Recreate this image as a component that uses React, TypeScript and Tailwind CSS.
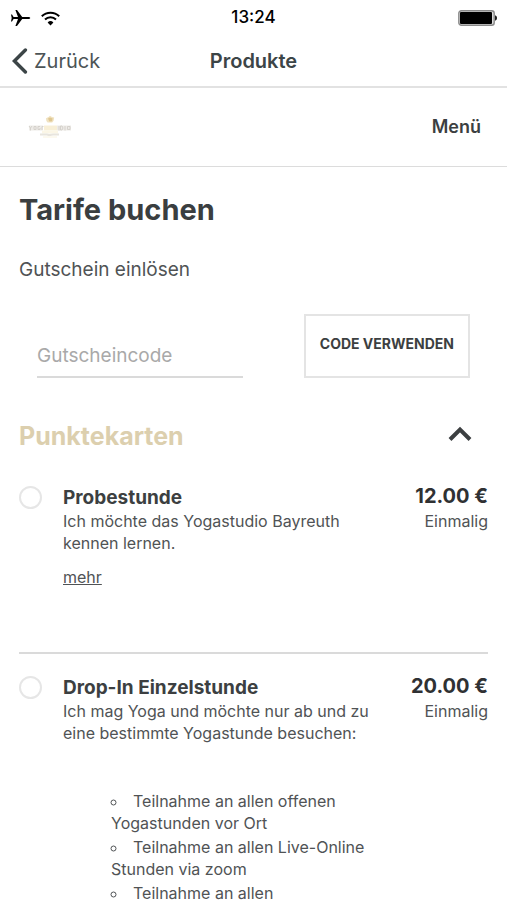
import React, { useState } from 'react';

const products = [
  {
    id: 'probestunde',
    name: 'Probestunde',
    price: '12.00 €',
    billing: 'Einmalig',
    description: 'Ich möchte das Yogastudio Bayreuth kennen lernen.',
    more: true,
    features: [],
  },
  {
    id: 'drop-in',
    name: 'Drop-In Einzelstunde',
    price: '20.00 €',
    billing: 'Einmalig',
    description: 'Ich mag Yoga und möchte nur ab und zu eine bestimmte Yogastunde besuchen:',
    more: false,
    features: [
      'Teilnahme an allen offenen Yogastunden vor Ort',
      'Teilnahme an allen Live-Online Stunden via zoom',
      'Teilnahme an allen',
    ],
  },
];

const StatusBar = () => (
  <div className="grid h-9 grid-cols-3 items-center px-2.5 text-black">
    <div className="flex items-center gap-2.5">
      {/* Airplane mode */}
      <svg width="21" height="18" viewBox="0 0 21 18" fill="currentColor" aria-hidden="true">
        <path d="M20.2 9c0 .7-1 1-2 1h-6L7 17H5.4L8 10H3.6L2 12.6H1L1.7 9 1 5.4h1L3.6 8H8L5.4 1H7l5.2 7h6c1 0 2 .3 2 1z" />
      </svg>
      {/* Wifi */}
      <svg width="19" height="15" viewBox="0 0 19 15" fill="none" stroke="currentColor" strokeWidth="2" aria-hidden="true">
        <path d="M.8 5.2a12.4 12.4 0 0 1 17.4 0" />
        <path d="M4 8.5a7.8 7.8 0 0 1 11 0" />
        <path d="M9.5 14.4 6.6 11.4a4.1 4.1 0 0 1 5.8 0z" fill="currentColor" stroke="none" />
      </svg>
    </div>
    <div className="text-center text-[17px] font-medium">13:24</div>
    <svg className="justify-self-end" width="39" height="16" viewBox="0 0 39 16" aria-hidden="true">
      <rect x=".8" y=".8" width="35.4" height="14.4" rx="2.5" fill="#ddd" stroke="#8a8a8a" strokeWidth="1.4" />
      <rect x="2" y="2" width="32" height="12" rx="1" fill="#000" />
      <path d="M37 5.2c1.3.4 2 1.5 2 2.8s-.7 2.4-2 2.8z" fill="#222" />
    </svg>
  </div>
);

const Logo = () => (
  <svg width="44" height="24" viewBox="0 0 44 24" role="img" aria-label="Yogastudio">
    <path d="M18 3.2 20.5 2 22 .8 24 2l2.2.6-.6 3.2-1.4 1.6h-4.6L18.4 6z" fill="#f0e2c0" />
    <path d="M20 3.6 22 2.4l2.6 1-.6 2.8-2.6.4z" fill="#dfc791" />
    <path d="M1 13h14M29 13h14" stroke="#eeece8" strokeWidth="5" />
    <path d="m1 11 1.5 2v2.5M2.5 13 4 11M6 11.5h2v3H6zM12 11.5h-2v3h2V13M14 15v-3.5h1.5M31 11v4.5M34 11h-1.5v4H34l1-2zM37 11v4.5M39.5 11.5h2.5v3h-2.5z" fill="none" stroke="#d2cfc9" strokeWidth=".9" />
    <path d="M16 13h13" stroke="#f8efd6" strokeWidth="5" />
    <path d="M14 17h16" stroke="#fbf6e6" strokeWidth="3" />
    <path d="M12 19.5h7l2 .6 4-.6h6" fill="none" stroke="#e8e5de" strokeWidth="2.2" />
    <path d="M15 22h14" stroke="#fbf7ea" strokeWidth="1.5" />
  </svg>
);

const App = () => {
  const [code, setCode] = useState('');
  const [open, setOpen] = useState(true);
  const [selected, setSelected] = useState('');

  return (
    <div className="flex h-dvh flex-col bg-white font-[Inter,sans-serif] text-[#505355]">
      <header className="shrink-0 border-b-2 border-[#e2e2e2]">
        <StatusBar />
        <nav className="grid h-[50px] grid-cols-3 items-center px-3">
          <button className="flex items-center gap-1.5 text-xl text-[#4c5456]">
            <svg width="16" height="26" viewBox="0 0 16 26" fill="none" stroke="#3c4547" strokeWidth="3.4" strokeLinecap="round" aria-hidden="true">
              <path d="M13.4 2 2.4 13l11 11" />
            </svg>
            Zurück
          </button>
          <div className="text-center text-xl font-semibold text-[#3c4547]">Produkte</div>
        </nav>
      </header>

      <main className="flex-1 overflow-y-auto [scrollbar-width:none]">
        <div className="flex h-[79px] items-center justify-between border-b border-[#dcdcdc] pr-[26px] pl-7">
          <Logo />
          <button className="text-lg font-semibold text-[#3c3f41]">Menü</button>
        </div>

        <div className="px-[19px] pt-[23px]">
          <h1 className="text-[29px] leading-10 font-bold text-[#3a3e40]">Tarife buchen</h1>
          <h2 className="mt-6 text-[19px] leading-8">Gutschein einlösen</h2>

          <form className="mt-7 flex items-end justify-between px-[18px]" onSubmit={e => e.preventDefault()}>
            <input
              className="h-11 w-[206px] border-b-2 border-[#dadada] text-[19px] outline-none placeholder:text-[#a9a9a9]"
              aria-label="Gutscheincode"
              placeholder="Gutscheincode"
              value={code}
              onChange={e => setCode(e.target.value)}
            />
            <button className="h-16 border-2 border-[#e4e4e4] px-3.5 pb-1 text-sm font-bold text-[#3c3f41]">
              CODE VERWENDEN
            </button>
          </form>

          <button
            className="mt-10 flex w-full items-center justify-between pr-4 text-[25px] leading-9 font-bold text-[#dccfae]"
            aria-expanded={open}
            onClick={() => setOpen(!open)}
          >
            Punktekarten
            <svg width="24" height="22" viewBox="0 0 24 22" fill="none" stroke="#3c3f41" strokeWidth="4" aria-hidden="true">
              <path d="M2 14.5 12 4.5l10 10" />
            </svg>
          </button>

          {open && (
            <ul className="pt-8">
              {products.map(product => (
                <li key={product.id} className="mb-[22px] flex items-start border-b-2 border-[#dadada] pb-16">
                  <input
                    id={product.id}
                    type="radio"
                    name="product"
                    className="size-[23px] shrink-0 appearance-none rounded-full border-2 border-[#e6e6e6] checked:border-[6px] checked:border-[#dccfae]"
                    checked={selected === product.id}
                    onChange={() => setSelected(product.id)}
                  />
                  <div className="ml-[21px] flex-1">
                    <label htmlFor={product.id} className="block text-[19px] leading-6 font-bold text-[#3c3f41]">
                      {product.name}
                    </label>
                    <p className="max-w-[310px] text-base leading-[22px]">{product.description}</p>
                    {product.more && (
                      <a href="#mehr" className="mt-3 block w-fit text-base leading-[22px] underline">mehr</a>
                    )}
                    {product.features.length > 0 && (
                      <ul className="mt-[46px] ml-12 flex max-w-[260px] list-inside list-[circle] flex-col gap-0.5 text-base leading-[22px]">
                        {product.features.map(feature => (
                          <li key={feature}>{feature}</li>
                        ))}
                      </ul>
                    )}
                  </div>
                  <div className="shrink-0 text-right">
                    <div className="mb-1 text-xl leading-5 font-bold text-[#2f3133]">{product.price}</div>
                    <div className="text-base leading-[22px]">{product.billing}</div>
                  </div>
                </li>
              ))}
            </ul>
          )}
        </div>
      </main>
    </div>
  );
};

export default App;
